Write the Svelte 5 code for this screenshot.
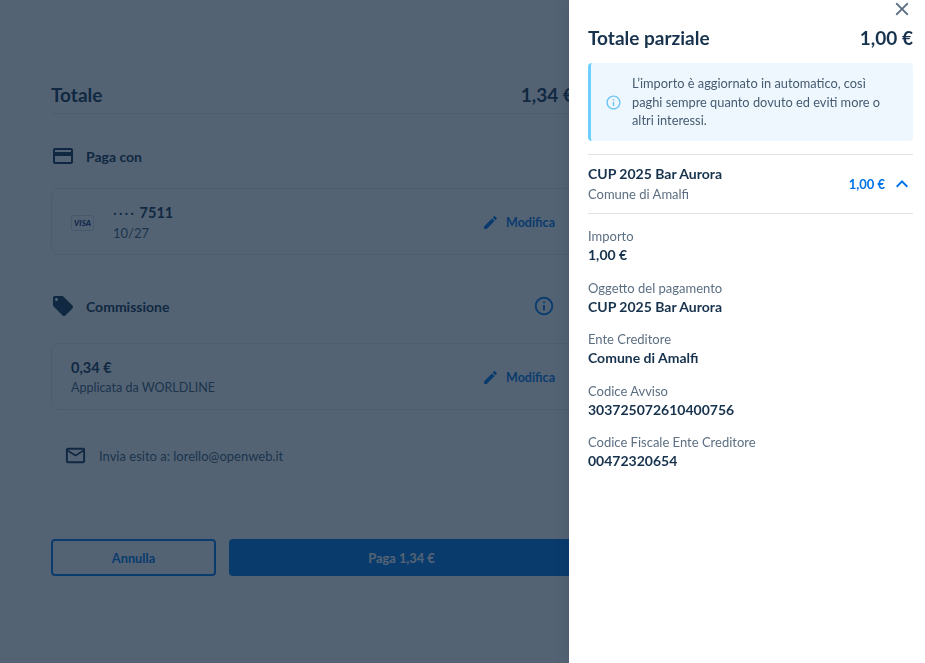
<script>
  const details = [
    { label: 'Importo', value: '1,00 €' },
    { label: 'Oggetto del pagamento', value: 'CUP 2025 Bar Aurora' },
    { label: 'Ente Creditore', value: 'Comune di Amalfi' },
    { label: 'Codice Avviso', value: '303725072610400756' },
    { label: 'Codice Fiscale Ente Creditore', value: '00472320654' }
  ];
</script>

<div class="page">
  <main class="content">
    <div class="total">
      <span>Totale</span>
      <span>1,34 €</span>
    </div>

    <div class="section-title first">
      <svg class="icon" viewBox="0 0 24 24"><path d="M20 4H4c-1.11 0-1.99.89-1.99 2L2 18c0 1.11.89 2 2 2h16c1.11 0 2-.89 2-2V6c0-1.11-.89-2-2-2zm0 14H4v-6h16v6zm0-10H4V6h16v2z" /></svg>
      <span>Paga con</span>
    </div>
    <div class="card">
      <div class="card-main">
        <span class="visa">VISA</span>
        <div class="card-text">
          <strong><i>····</i> 7511</strong>
          <span>10/27</span>
        </div>
      </div>
      <span class="edit">
        <svg viewBox="0 0 24 24"><path d="M3 17.25V21h3.75L17.81 9.94l-3.75-3.75L3 17.25zM20.71 7.04c.39-.39.39-1.02 0-1.41l-2.34-2.34c-.39-.39-1.02-.39-1.41 0l-1.83 1.83 3.75 3.75 1.83-1.83z" /></svg>
        Modifica
      </span>
    </div>

    <div class="section-title second">
      <svg class="icon" viewBox="0 0 24 24"><path d="M21.41 11.58l-9-9C12.05 2.22 11.55 2 11 2H4c-1.1 0-2 .9-2 2v7c0 .55.22 1.05.59 1.42l9 9c.36.36.86.58 1.41.58.55 0 1.05-.22 1.41-.59l7-7c.37-.36.59-.86.59-1.41 0-.55-.23-1.06-.59-1.42zM5.5 7C4.67 7 4 6.33 4 5.5S4.67 4 5.5 4 7 4.67 7 5.5 6.33 7 5.5 7z" /></svg>
      <span>Commissione</span>
      <svg class="info-btn" viewBox="0 0 24 24"><path d="M11 7h2v2h-2zm0 4h2v6h-2zm1-9C6.48 2 2 6.48 2 12s4.48 10 10 10 10-4.48 10-10S17.52 2 12 2zm0 18c-4.41 0-8-3.59-8-8s3.59-8 8-8 8 3.59 8 8-3.59 8-8 8z" /></svg>
    </div>
    <div class="card fee">
      <div class="card-text">
        <strong>0,34 €</strong>
        <span>Applicata da WORLDLINE</span>
      </div>
      <span class="edit">
        <svg viewBox="0 0 24 24"><path d="M3 17.25V21h3.75L17.81 9.94l-3.75-3.75L3 17.25zM20.71 7.04c.39-.39.39-1.02 0-1.41l-2.34-2.34c-.39-.39-1.02-.39-1.41 0l-1.83 1.83 3.75 3.75 1.83-1.83z" /></svg>
        Modifica
      </span>
    </div>

    <div class="mail">
      <svg viewBox="0 0 24 24"><path d="M22 6c0-1.1-.9-2-2-2H4c-1.1 0-2 .9-2 2v12c0 1.1.9 2 2 2h16c1.1 0 2-.9 2-2V6zm-2 0l-8 5-8-5h16zm0 12H4V8l8 5 8-5v10z" /></svg>
      <span>Invia esito a: lorello@openweb.it</span>
    </div>

    <div class="actions">
      <button class="cancel">Annulla</button>
      <button class="pay">Paga 1,34 €</button>
    </div>
  </main>
</div>

<div class="backdrop"></div>

<aside class="drawer">
  <div class="close">
    <svg viewBox="0 0 24 24"><path d="M19 6.41 17.59 5 12 10.59 6.41 5 5 6.41 10.59 12 5 17.59 6.41 19 12 13.41 17.59 19 19 17.59 13.41 12z" /></svg>
  </div>
  <div class="drawer-head">
    <span>Totale parziale</span>
    <span>1,00 €</span>
  </div>
  <div class="alert">
    <svg viewBox="0 0 24 24"><path d="M11 7h2v2h-2zm0 4h2v6h-2zm1-9C6.48 2 2 6.48 2 12s4.48 10 10 10 10-4.48 10-10S17.52 2 12 2zm0 18c-4.41 0-8-3.59-8-8s3.59-8 8-8 8 3.59 8 8-3.59 8-8 8z" /></svg>
    <p>L’importo è aggiornato in automatico, così paghi sempre quanto dovuto ed eviti more o altri interessi.</p>
  </div>
  <div class="accordion">
    <div class="acc-title">
      <strong>CUP 2025 Bar Aurora</strong>
      <span>Comune di Amalfi</span>
    </div>
    <span class="acc-amount">1,00 €</span>
    <svg class="chevron" viewBox="0 0 24 24"><path d="M7.41 15.41 12 10.83l4.59 4.58L18 14l-6-6-6 6z" /></svg>
  </div>
  <dl class="details">
    {#each details as item}
      <div>
        <dt>{item.label}</dt>
        <dd>{item.value}</dd>
      </div>
    {/each}
  </dl>
</aside>

<style>
  :global(body) {
    margin: 0;
    background: #fff;
    font-family: "Lato", "Noto Sans", sans-serif;
    color: #17324d;
    overflow: hidden;
  }

  .page {
    height: 663px;
    padding-left: 51px;
    box-sizing: border-box;
    overflow: hidden;
  }

  .content {
    width: 523px;
    padding-top: 77px;
  }

  .total {
    display: flex;
    justify-content: space-between;
    align-items: center;
    height: 34px;
    padding-bottom: 2px;
    border-bottom: 1px solid #e8ebf1;
    font-size: 19px;
    font-weight: 700;
  }

  .section-title {
    display: flex;
    align-items: center;
    height: 24px;
    font-size: 14px;
    font-weight: 700;
    gap: 11px;
  }

  .section-title.first {
    margin-top: 30px;
  }

  .section-title.second {
    margin-top: 39px;
  }

  .icon {
    width: 24px;
    height: 24px;
    fill: #17324d;
  }

  .info-btn {
    width: 22px;
    height: 22px;
    fill: #0073e6;
    margin-left: auto;
    margin-right: 19px;
  }

  .card {
    display: flex;
    justify-content: space-between;
    align-items: center;
    box-sizing: border-box;
    height: 67px;
    margin-top: 20px;
    padding: 2px 18px 0 19px;
    border: 1px solid #e8ebf1;
    border-radius: 8px;
  }

  .card.fee {
    margin-top: 25px;
  }

  .card-main {
    display: flex;
    align-items: center;
    gap: 19px;
  }

  .visa {
    box-sizing: border-box;
    width: 23px;
    height: 16px;
    border: 1px solid #d5dae2;
    border-radius: 2px;
    color: #1a2a6c;
    font-size: 8px;
    font-weight: 900;
    font-style: italic;
    line-height: 14px;
    text-align: center;
  }

  .card-text {
    display: flex;
    flex-direction: column;
    gap: 2px;
    font-size: 13px;
    line-height: 18px;
    color: #455b71;
  }

  .card-text strong {
    font-size: 14.5px;
    color: #17324d;
  }

  .card-text i {
    font-style: normal;
    font-weight: 400;
    letter-spacing: 2px;
  }

  .fee .card-text span {
    font-size: 12.5px;
  }

  .edit {
    display: flex;
    align-items: center;
    gap: 7px;
    color: #0073e6;
    font-size: 12.5px;
    font-weight: 700;
  }

  .edit svg {
    width: 17px;
    height: 17px;
    fill: #0073e6;
  }

  .mail {
    display: flex;
    align-items: center;
    gap: 12px;
    margin-top: 34px;
    padding-left: 13px;
    font-size: 13px;
    color: #455b71;
  }

  .mail svg {
    width: 23px;
    height: 23px;
    fill: #17324d;
  }

  .actions {
    display: flex;
    gap: 13px;
    margin-top: 72px;
  }

  button {
    box-sizing: border-box;
    height: 37px;
    border-radius: 4px;
    font: 700 12.8px "Lato", sans-serif;
  }

  .cancel {
    width: 165px;
    border: 2px solid #0073e6;
    background: #fff;
    color: #0073e6;
  }

  .pay {
    flex: 1;
    border: 0;
    background: #0073e6;
    color: #fff;
  }

  .backdrop {
    position: fixed;
    inset: 0;
    background: rgba(14, 37, 60, 0.715);
  }

  .drawer {
    position: fixed;
    top: 0;
    right: 0;
    bottom: 0;
    width: 356px;
    box-sizing: border-box;
    padding: 0 12px 0 19px;
    background: #fff;
    box-shadow: -4px 0 12px rgba(23, 50, 77, 0.12);
  }

  .close {
    display: flex;
    justify-content: flex-end;
    height: 19px;
  }

  .close svg {
    width: 22px;
    height: 22px;
    margin-top: -2px;
    fill: #5c6f82;
  }

  .drawer-head {
    display: flex;
    justify-content: space-between;
    align-items: center;
    height: 36px;
    font-size: 19px;
    font-weight: 700;
  }

  .alert {
    display: flex;
    align-items: center;
    gap: 10px;
    box-sizing: border-box;
    height: 78px;
    margin-top: 8px;
    padding: 0 14px;
    background: #eef7fe;
    border-left: 3px solid #6cd0ff;
    border-radius: 4px;
  }

  .alert svg {
    width: 17px;
    height: 17px;
    flex: none;
    fill: #6cc4f5;
  }

  .alert p {
    margin: 0;
    font-size: 12.8px;
    line-height: 18.5px;
    color: #455b71;
  }

  .accordion {
    display: flex;
    align-items: center;
    box-sizing: border-box;
    height: 60px;
    margin-top: 13px;
    border-top: 1px solid #e0e3e8;
    border-bottom: 1px solid #e0e3e8;
  }

  .acc-title {
    display: flex;
    flex-direction: column;
    flex: 1;
    gap: 2px;
  }

  .acc-title strong {
    font-size: 14px;
    line-height: 18px;
  }

  .acc-title span {
    font-size: 13px;
    line-height: 18px;
    color: #5c6f82;
  }

  .acc-amount {
    font-size: 13px;
    font-weight: 700;
    color: #0073e6;
  }

  .chevron {
    width: 24px;
    height: 24px;
    margin: 0 -1px 0 5px;
    fill: #0073e6;
  }

  .details {
    display: flex;
    flex-direction: column;
    gap: 14.5px;
    margin: 13px 0 0;
  }

  dt {
    font-size: 13px;
    line-height: 18px;
    color: #5c6f82;
  }

  dd {
    margin: 0;
    font-size: 14px;
    font-weight: 700;
    line-height: 19px;
    color: #17324d;
  }
</style>
